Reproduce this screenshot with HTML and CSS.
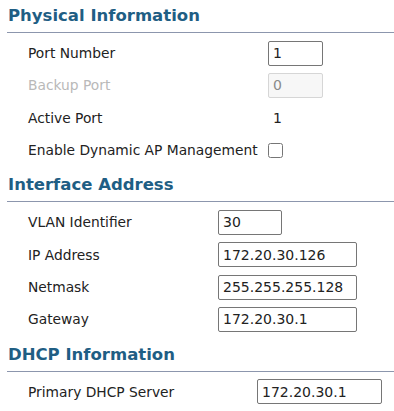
FILE: index.html
```
<!DOCTYPE html>
<html lang="en">

<head>
    <meta charset="UTF-8">
    <meta name="viewport" content="width=device-width, initial-scale=1.0">
    <title>Port Settings</title>
    <link rel="stylesheet" href="styles.css">
</head>

<body>

    <!-- Physical Information -->
    <section class="section">
        <h2>Physical Information</h2>
        <div class="fields fields-physical">
            <label class="label" for="port">Port Number</label>
            <div class="value"><input type="text" id="port" class="input input-port" value="1"></div>

            <label class="label disabled" for="backup">Backup Port</label>
            <div class="value"><input type="text" id="backup" class="input input-port" value="0" disabled></div>

            <div class="label">Active Port</div>
            <div class="value"><span class="static">1</span></div>

            <label class="label" for="dynamic">Enable Dynamic AP Management</label>
            <div class="value"><input type="checkbox" id="dynamic" class="check"></div>
        </div>
    </section>

    <!-- Interface Address -->
    <section class="section">
        <h2>Interface Address</h2>
        <div class="fields fields-interface">
            <label class="label" for="vlan">VLAN Identifier</label>
            <div class="value"><input type="text" id="vlan" class="input input-vlan" value="30"></div>

            <label class="label" for="ip">IP Address</label>
            <div class="value"><input type="text" id="ip" class="input input-ip" value="172.20.30.126"></div>

            <label class="label" for="netmask">Netmask</label>
            <div class="value"><input type="text" id="netmask" class="input input-ip" value="255.255.255.128"></div>

            <label class="label" for="gateway">Gateway</label>
            <div class="value"><input type="text" id="gateway" class="input input-ip" value="172.20.30.1"></div>
        </div>
    </section>

    <!-- DHCP Information -->
    <section class="section">
        <h2>DHCP Information</h2>
        <div class="fields fields-dhcp">
            <label class="label" for="dhcp">Primary DHCP Server</label>
            <div class="value"><input type="text" id="dhcp" class="input input-dhcp" value="172.20.30.1"></div>
        </div>
    </section>

</body>

</html>
```

FILE: styles.css
```
* {
    margin: 0;
    padding: 0;
    box-sizing: border-box;
    font-family: "DejaVu Sans", Verdana, sans-serif;
}

body {
    background-color: #ffffff;
    color: #222222;
    font-size: 14px;
}

/* Sections */
.section {
    margin-bottom: 3px;
}

.section h2 {
    margin-left: 7px;
    padding: 6px 0 6px 1px;
    font-size: 16.5px;
    line-height: 20px;
    font-weight: bold;
    color: #1f5e84;
    border-bottom: 1px solid #8c96ad;
}

/* Field grid */
.fields {
    display: grid;
    grid-auto-rows: 32.33px;
    align-items: center;
    padding-left: 28px;
    margin-top: 4px;
}

.fields-physical {
    grid-template-columns: 240px auto;
}

.fields-interface {
    grid-template-columns: 190px auto;
}

.fields-dhcp {
    grid-template-columns: 229px auto;
}

.label {
    font-size: 13.8px;
    line-height: 18px;
    color: #222222;
}

.label.disabled {
    color: #b9b9b9;
}

.value {
    display: flex;
    align-items: center;
}

.static {
    padding-left: 5px;
}

/* Inputs */
.input {
    height: 25px;
    padding: 1px 4px;
    font-size: 14px;
    color: #222222;
    background: #ffffff;
    border: 1px solid #767676;
    border-radius: 2px;
    outline: none;
}

.input:disabled {
    background: #f7f7f7;
    border-color: #d6d6d6;
    color: #8a8a8a;
}

.input-port {
    width: 55px;
}

.input-vlan {
    width: 64px;
}

.input-ip {
    width: 139px;
}

.input-dhcp {
    width: 125px;
}

.check {
    width: 15px;
    height: 15px;
    margin: 0;
}
```
